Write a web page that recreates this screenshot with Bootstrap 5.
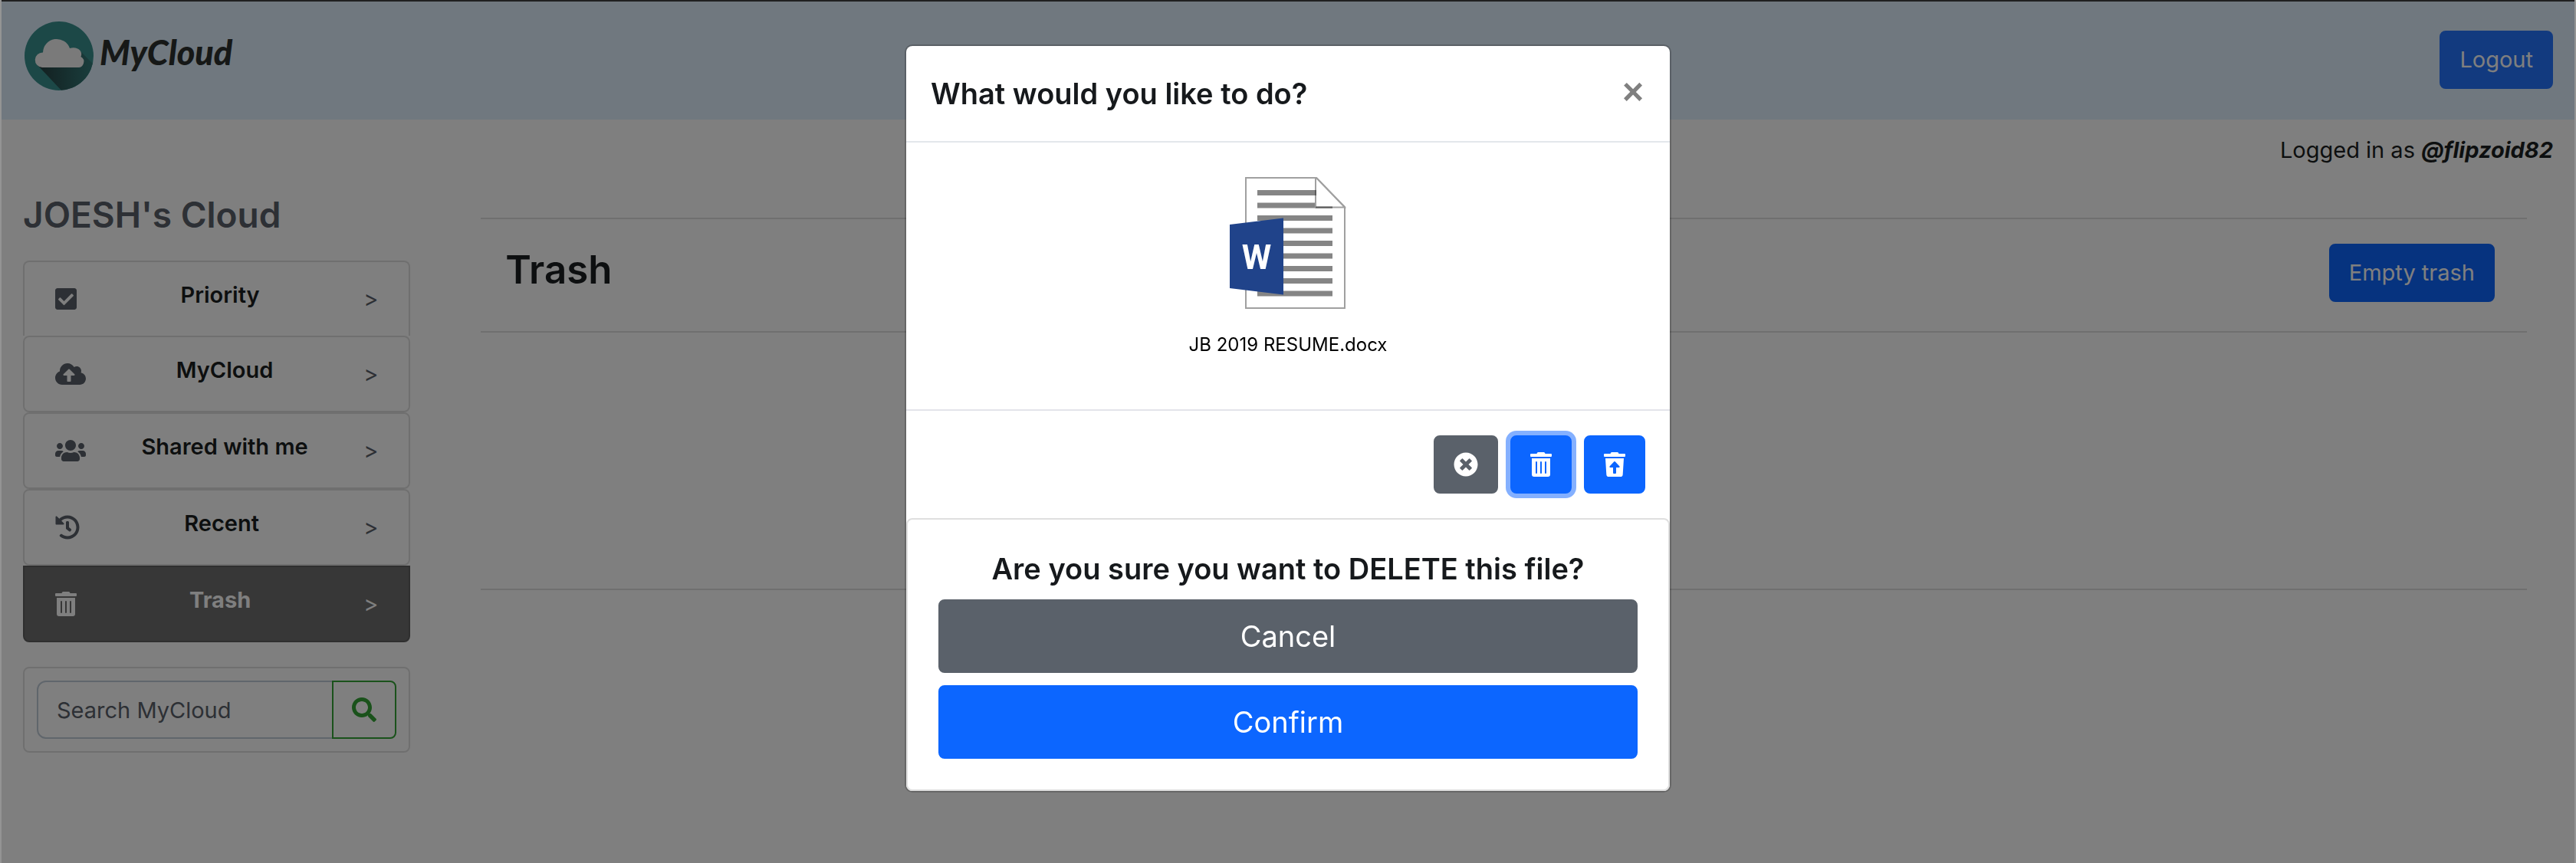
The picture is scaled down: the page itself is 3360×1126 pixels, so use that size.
<!DOCTYPE html>
<html lang="en">
<head>
<meta charset="utf-8">
<meta name="viewport" content="width=device-width, initial-scale=1">
<title>MyCloud - Trash</title>
<link href="https://cdn.jsdelivr.net/npm/bootstrap@5.3.0/dist/css/bootstrap.min.css" rel="stylesheet">
<style>
:root{--bs-border-width:2px;--bs-body-font-family:Inter,"Liberation Sans",sans-serif;--bs-border-radius:8px;--line:rgba(0,0,0,.125);--blue:#0c66ff;--slate:#5a616a}
html{font-size:32px}
body{font-size:29px;line-height:48px;color:#1b1e21;padding:2px 2px 0}
.window-edge{position:fixed;inset:0;z-index:2000;pointer-events:none;border:solid rgba(255,255,255,.16);border-width:0 2px}
.window-edge::before{content:"";display:block;height:2px;background:#202020}
.ic{height:32px;width:auto;fill:currentColor;display:block}
.btn{--bs-btn-border-radius:8px;--bs-btn-border-width:2px;--bs-btn-padding-x:24px;--bs-btn-padding-y:12px;--bs-btn-font-size:29px;--bs-btn-line-height:48px}
.btn .ic{margin:8px 0}
.btn-primary{--bs-btn-bg:var(--blue);--bs-btn-border-color:var(--blue)}
.btn-secondary{--bs-btn-bg:var(--slate);--bs-btn-border-color:var(--slate)}
.btn-logout{--bs-btn-bg:#2474ff;--bs-btn-border-color:#2474ff}
.btn-lg{--bs-btn-padding-y:16px;--bs-btn-font-size:38px;--bs-btn-line-height:60px}
.topbar{background:#e0f0ff;padding:0 28px 2px 30px}
.brand{height:152px;padding-top:26px;gap:8px;color:#2d312f;text-decoration:none;font:italic 900 45px/80px Lato,cursive,sans-serif}
.brand svg{width:90px;height:90px}
.signed-in{padding:16px 28px 0}
.side{padding:32px 26px 0 28px}
.side h1{font-size:46px;line-height:56px;margin-bottom:32px;font-weight:600;color:var(--slate)}
.side-link{display:flex;justify-content:space-between;align-items:flex-start;height:100px;padding:24px 40px;border:2px solid var(--line);border-radius:8px;color:var(--slate);text-decoration:none}
.side-link .ic{margin:8px 0}
.side-link b{font-weight:600;font-size:29px;line-height:38px;color:#1b1e21}
.side-link:first-child{border-radius:8px 8px 0 0;border-bottom:0;height:98px}
.side-link.current{background:#6e6e6e;border-color:#5f5f5f;border-radius:0 0 8px 8px;color:#fff}
.side-link.current b{color:#fff;font-weight:700}
.finder{margin-top:32px;padding:16px;border:2px solid var(--line);border-radius:8px}
.finder .form-control{border-color:#c0ccd8;font-size:29px;line-height:48px;padding:12px 24px;height:76px}
.finder .form-control::placeholder{color:var(--slate)}
.btn-find{--bs-btn-color:#34a436;--bs-btn-border-color:#34a436}
.files{padding:64px 62px 0 66px}
.files hr{margin:0;border-top:2px solid rgba(0,0,0,.125);opacity:1}
.files-head{padding:32px 42px 38px 32px}
.files-head h2{font-size:51px;line-height:68px;margin:0;font-weight:600}
.files-list{height:334px}
.modal-backdrop{--bs-backdrop-opacity:.5}
.modal{padding-top:2px}
.modal-dialog{max-width:1000px;margin:56px auto}
.modal-content{border:2px solid rgba(0,0,0,.2);border-radius:10px;color:#16191c}
.modal-header{padding:32px;border-bottom:2px solid #e3e7eb;border-radius:0}
.modal-header h5{font-size:38px;line-height:60px;font-weight:600}
.x-close{border:0;background:none;padding:0 2px;color:#808080;font:700 48px/56px "Liberation Sans",sans-serif}
.modal-body{padding:32px;height:348px}
.modal-body svg{width:152px;height:176px;margin-top:12px;flex:none}
.file-name{font-size:24px;line-height:40px;color:#000;margin-top:24px}
.modal-footer{padding:32px;gap:16px;border-top:2px solid #e3e4ea;border-radius:0}
.modal-footer>*{margin:0}
.modal-footer .ringed{box-shadow:0 0 0 6px #84b0ff}
.ask{border:2px solid #dfdfdf;border-radius:8px;padding:40px}
.ask h5{font-size:38px;line-height:48px;margin-bottom:16px;font-weight:600}
</style>
</head>
<body>
<div class="window-edge"></div>
<nav class="topbar d-flex justify-content-between align-items-center">
  <a class="brand d-flex align-items-start" href="#">
    <svg viewBox="0 0 90 90" aria-hidden="true">
      <defs><linearGradient id="shade" x1="0" x2="1"><stop offset="0" stop-color="#263f40"/><stop offset="1" stop-color="#347c7b"/></linearGradient><clipPath id="disc"><circle cx="45" cy="45" r="45"/></clipPath></defs>
      <circle cx="45" cy="45" r="45" fill="#38918e"/>
      <path clip-path="url(#disc)" d="M17 57 49 91h41V56L73 39z" fill="url(#shade)"/>
      <path d="M23 60a9.500 9.500 0 0 1 1-19.500A18 18 0 0 1 59 35c9-3 18 3 14.500 11A7.500 7.500 0 0 1 69 60z" fill="#f4f4f4"/>
    </svg>
    <span>MyCloud</span>
  </a>
  <button class="btn btn-primary btn-logout" type="button">Logout</button>
</nav>
<div class="signed-in text-end">Logged in as <strong><em>@flipzoid82</em></strong></div>
<main class="row g-0">
  <aside class="col-2 side">
    <h1>JOESH's Cloud</h1>
    <nav>
      <a class="side-link" href="#"><svg class="ic" viewBox="0 0 448 512"><path d="M400 480H48c-26.510 0-48-21.490-48-48V80c0-26.510 21.490-48 48-48h352c26.510 0 48 21.490 48 48v352c0 26.510-21.490 48-48 48zm-204.686-98.059l184-184c6.248-6.248 6.248-16.379 0-22.627l-22.627-22.627c-6.248-6.248-16.379-6.249-22.628 0L184 302.745l-70.059-70.059c-6.248-6.248-16.379-6.248-22.628 0l-22.627 22.627c-6.248 6.248-6.248 16.379 0 22.627l104 104c6.249 6.249 16.379 6.249 22.628.001z"/></svg><b>Priority</b><span>&gt;</span></a>
      <a class="side-link" href="#"><svg class="ic" viewBox="0 0 640 512"><path d="M537.6 226.6c4.1-10.7 6.400-22.400 6.400-34.600 0-53-43-96-96-96-19.700 0-38.100 6-53.300 16.200C367 64.200 315.300 32 256 32c-88.400 0-160 71.600-160 160 0 2.700.1 5.400.2 8.100C40.200 219.800 0 273.200 0 336c0 79.500 64.500 144 144 144h368c70.700 0 128-57.300 128-128 0-61.900-44-113.600-102.400-125.400zM393.400 288H328v112c0 8.800-7.200 16-16 16h-48c-8.800 0-16-7.200-16-16V288h-65.400c-14.300 0-21.400-17.200-11.300-27.300l105.400-105.400c6.200-6.200 16.400-6.200 22.600 0l105.400 105.400c10.100 10.100 2.900 27.300-11.300 27.300z"/></svg><b>MyCloud</b><span>&gt;</span></a>
      <a class="side-link" href="#"><svg class="ic" viewBox="0 0 640 512"><path d="M96 224c35.300 0 64-28.700 64-64s-28.700-64-64-64-64 28.700-64 64 28.700 64 64 64zm448 0c35.300 0 64-28.700 64-64s-28.700-64-64-64-64 28.700-64 64 28.700 64 64 64zm32 32h-64c-17.600 0-33.500 7.100-45.100 18.600 40.300 22.100 68.900 62 75.100 109.400h66c17.700 0 32-14.300 32-32v-32c0-35.300-28.700-64-64-64zm-256 0c61.900 0 112-50.100 112-112S381.900 32 320 32 208 82.100 208 144s50.100 112 112 112zm76.800 32h-8.300c-20.800 10-43.900 16-68.500 16s-47.600-6-68.500-16h-8.300C179.600 288 128 339.600 128 403.200V432c0 26.500 21.500 48 48 48h288c26.500 0 48-21.500 48-48v-28.800c0-63.600-51.600-115.200-115.200-115.200zm-223.700-13.400C161.500 263.100 145.600 256 128 256H64c-35.300 0-64 28.700-64 64v32c0 17.700 14.300 32 32 32h65.900c6.300-47.400 34.900-87.300 75.200-109.400z"/></svg><b>Shared with me</b><span>&gt;</span></a>
      <a class="side-link" href="#"><svg class="ic" viewBox="0 0 512 512"><path d="M504 255.531c.253 136.640-111.180 248.372-247.820 248.468-59.015.042-113.223-20.530-155.822-54.911-11.077-8.940-11.905-25.541-1.839-35.607l11.267-11.267c8.609-8.609 22.353-9.551 31.891-1.984C173.062 425.135 212.781 440 256 440c101.705 0 184-82.311 184-184 0-101.705-82.311-184-184-184-48.814 0-93.149 18.969-126.068 49.932l50.754 50.754c10.080 10.080 2.941 27.314-11.313 27.314H24c-8.837 0-16-7.163-16-16V38.627c0-14.254 17.234-21.393 27.314-11.314l49.372 49.372C129.209 34.136 189.552 8 256 8c136.810 0 247.747 110.780 248 247.531zm-180.912 78.784l9.823-12.630c8.138-10.463 6.253-25.542-4.210-33.679L288 256.349V152c0-13.255-10.745-24-24-24h-16c-13.255 0-24 10.745-24 24v135.651l65.409 50.874c10.463 8.137 25.541 6.253 33.679-4.210z"/></svg><b>Recent</b><span>&gt;</span></a>
      <a class="side-link current" href="#" aria-current="page"><svg class="ic" viewBox="0 0 448 512"><path id="bin" d="M32 464a48 48 0 0 0 48 48h288a48 48 0 0 0 48-48V128H32zm272-256a16 16 0 0 1 32 0v224a16 16 0 0 1-32 0zm-96 0a16 16 0 0 1 32 0v224a16 16 0 0 1-32 0zm-96 0a16 16 0 0 1 32 0v224a16 16 0 0 1-32 0zM432 32H312l-9.400-18.700A24 24 0 0 0 281.100 0H166.800a23.720 23.720 0 0 0-21.400 13.300L136 32H16A16 16 0 0 0 0 48v32a16 16 0 0 0 16 16h416a16 16 0 0 0 16-16V48a16 16 0 0 0-16-16z"/></svg><b>Trash</b><span>&gt;</span></a>
    </nav>
    <form class="finder">
      <div class="input-group">
        <input class="form-control" type="search" placeholder="Search MyCloud" aria-label="Search MyCloud">
        <button class="btn btn-find" type="button" aria-label="Search"><svg class="ic" viewBox="0 0 512 512"><path d="M505 442.700L405.300 343c-4.500-4.500-10.600-7-17-7H372c27.600-35.300 44-79.700 44-128C416 93.100 322.900 0 208 0S0 93.100 0 208s93.100 208 208 208c48.300 0 92.700-16.400 128-44v16.300c0 6.400 2.500 12.500 7 17l99.700 99.700c9.400 9.400 24.600 9.400 33.900 0l28.300-28.300c9.400-9.400 9.400-24.600.1-34zM208 336c-70.700 0-128-57.200-128-128 0-70.700 57.200-128 128-128 70.700 0 128 57.200 128 128 0 70.700-57.200 128-128 128z"/></svg></button>
      </div>
    </form>
  </aside>
  <section class="col-10 files">
    <hr>
    <div class="files-head d-flex justify-content-between align-items-start">
      <h2>Trash</h2>
      <button class="btn btn-primary" type="button">Empty trash</button>
    </div>
    <hr>
    <div class="files-list"></div>
    <hr>
  </section>
</main>

<div class="modal-backdrop show"></div>
<div class="modal d-block" tabindex="-1" role="dialog" aria-labelledby="askTitle">
  <div class="modal-dialog">
    <div class="modal-content">
      <div class="modal-header d-flex justify-content-between align-items-start">
        <h5 class="modal-title" id="askTitle">What would you like to do?</h5>
        <button class="x-close" type="button" aria-label="Close">×</button>
      </div>
      <div class="modal-body text-center d-flex flex-column align-items-center">
        <svg viewBox="0 0 152 176" aria-hidden="true">
          <path d="M21 2h92l37 38v132H21z" fill="#fff" stroke="#a0a0a0" stroke-width="2"/>
          <path d="M36 18h77v7H36zM36 34.500h98v7H36zM36 51h98v7H36zM36 67.500h98v7H36zM36 84h98v7H36zM36 100.500h98v7H36zM36 117h98v7H36zM36 133h98v7H36zM36 149.500h98v7H36z" fill="#858585"/>
          <path d="M112 3v37h37z" fill="#fff"/>
          <path d="M112 2v38.500h38L113 2" fill="none" stroke="#a0a0a0" stroke-width="2"/>
          <path d="M112 18v7M112 40.500h22" fill="none" stroke="#5a5a5a" stroke-width="2"/>
          <path d="M0 63 70 54.500v100L0 146z" fill="#20438a"/>
          <text x="35" y="121" text-anchor="middle" font-family="Roboto, sans-serif" font-weight="700" font-size="44" fill="#fff">W</text>
        </svg>
        <div class="file-name">JB 2019 RESUME.docx</div>
      </div>
      <div class="modal-footer">
        <button class="btn btn-secondary" type="button" aria-label="Close"><svg class="ic" viewBox="0 0 512 512"><path d="M256 8C119 8 8 119 8 256s111 248 248 248 248-111 248-248S393 8 256 8zm121.600 313.100c4.700 4.700 4.700 12.300 0 17L338 377.600c-4.700 4.700-12.300 4.700-17 0L256 312l-65.100 65.600c-4.700 4.700-12.300 4.700-17 0L134.400 338c-4.700-4.700-4.700-12.300 0-17l65.600-65-65.600-65.100c-4.700-4.700-4.700-12.300 0-17l39.600-39.600c4.700-4.700 12.300-4.700 17 0l65 65.700 65.100-65.600c4.700-4.700 12.300-4.700 17 0l39.600 39.600c4.700 4.700 4.700 12.300 0 17L312 256l65.600 65.100z"/></svg></button>
        <button class="btn btn-primary ringed" type="button" aria-label="Delete"><svg class="ic" viewBox="0 0 448 512"><use href="#bin"/></svg></button>
        <button class="btn btn-primary" type="button" aria-label="Restore"><svg class="ic" viewBox="0 0 448 512"><path d="M53.200 467a48 48 0 0 0 47.900 45h245.800a48 48 0 0 0 47.900-45L416 128H32zm70.100-175.800l89.400-94.300a15.400 15.400 0 0 1 22.600 0l89.400 94.300c9.300 9.900 2.800 28.800-11.300 28.800H256v112a16 16 0 0 1-16 16h-32a16 16 0 0 1-16-16V320h-57.400c-14.100 0-20.600-18.900-11.300-28.800zM432 32H312l-9.400-18.700A24 24 0 0 0 281.100 0H166.800a23.720 23.720 0 0 0-21.400 13.300L136 32H16A16 16 0 0 0 0 48v32a16 16 0 0 0 16 16h416a16 16 0 0 0 16-16V48a16 16 0 0 0-16-16z"/></svg></button>
      </div>
      <div class="ask text-center">
        <h5>Are you sure you want to DELETE this file?</h5>
        <div class="d-grid gap-2">
          <button class="btn btn-secondary btn-lg" type="button">Cancel</button>
          <button class="btn btn-primary btn-lg" type="button">Confirm</button>
        </div>
      </div>
    </div>
  </div>
</div>
<script src="https://cdn.jsdelivr.net/npm/bootstrap@5.3.0/dist/js/bootstrap.bundle.min.js"></script>
</body>
</html>
